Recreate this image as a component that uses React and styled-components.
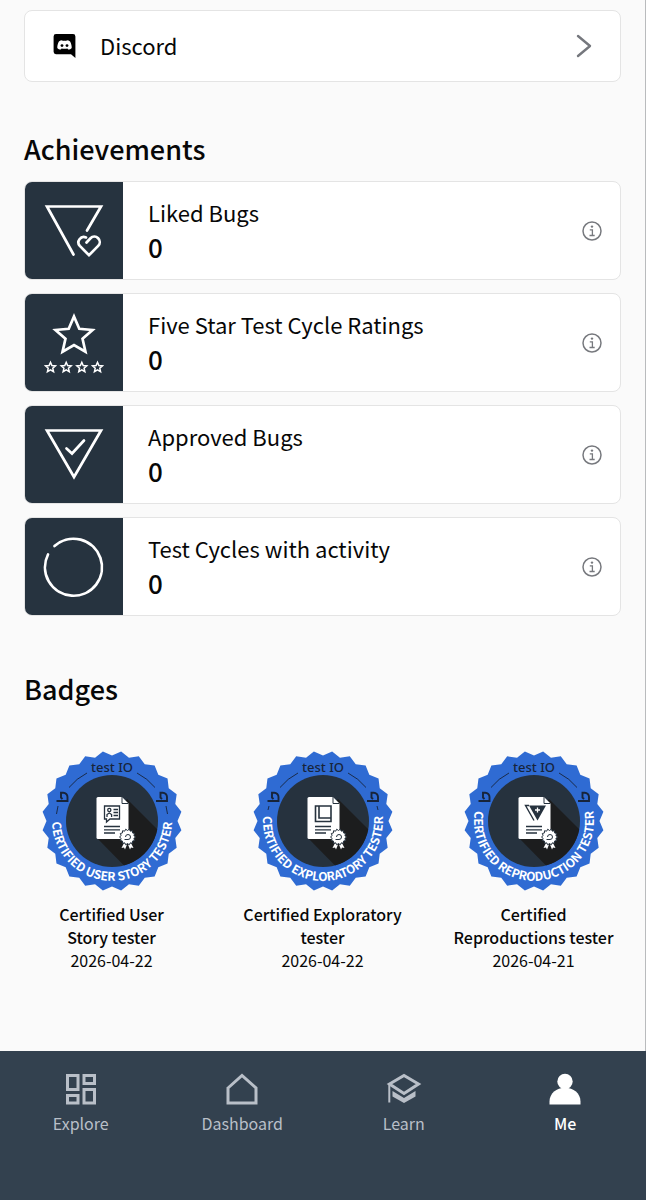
import styled, { createGlobalStyle } from "styled-components";

const achievements = [
  { title: "Liked Bugs", value: 0, icon: LikedIcon },
  { title: "Five Star Test Cycle Ratings", value: 0, icon: StarsIcon },
  { title: "Approved Bugs", value: 0, icon: ApprovedIcon },
  { title: "Test Cycles with activity", value: 0, icon: CycleIcon },
];

const badges = [
  {
    id: "story",
    title: "Certified User\nStory tester",
    ring: "CERTIFIED USER STORY TESTER",
    date: "2026-04-22",
  },
  {
    id: "exploratory",
    title: "Certified Exploratory\ntester",
    ring: "CERTIFIED EXPLORATORY TESTER",
    date: "2026-04-22",
  },
  {
    id: "reproduction",
    title: "Certified\nReproductions tester",
    ring: "CERTIFIED REPRODUCTION TESTER",
    date: "2026-04-21",
  },
];

const tabs = [
  { label: "Explore", icon: ExploreIcon },
  { label: "Dashboard", icon: HomeIcon },
  { label: "Learn", icon: LearnIcon },
  { label: "Me", icon: MeIcon, active: true },
];

const App = () => {
  return (
    <>
      <GlobalStyle />
      <Page>
        <Content>
          <LinkCard href="#discord">
            <DiscordIcon />
            <span>Discord</span>
            <ChevronIcon />
          </LinkCard>

          {/* achievements */}
          <section>
            <Heading>Achievements</Heading>
            <CardList>
              {achievements.map(({ title, value, icon: Icon }) => (
                <Card key={title}>
                  <Tile>
                    <Icon />
                  </Tile>
                  <CardText>
                    <CardTitle>{title}</CardTitle>
                    <CardValue>{value}</CardValue>
                  </CardText>
                  <InfoButton aria-label={`About ${title}`}>
                    <InfoIcon />
                  </InfoButton>
                </Card>
              ))}
            </CardList>
          </section>

          {/* badges */}
          <section>
            <Heading>Badges</Heading>
            <BadgeGrid>
              {badges.map((badge) => (
                <Badge key={badge.id}>
                  <Seal id={badge.id} ring={badge.ring} />
                  <BadgeTitle>{badge.title}</BadgeTitle>
                  <BadgeDate>{badge.date}</BadgeDate>
                </Badge>
              ))}
            </BadgeGrid>
          </section>
        </Content>

        <TabBar>
          {tabs.map(({ label, icon: Icon, active }) => (
            <Tab key={label} href={`#${label.toLowerCase()}`} $active={active}>
              <Icon />
              <span>{label}</span>
            </Tab>
          ))}
        </TabBar>
      </Page>
    </>
  );
};

export default App;

// icons

function DiscordIcon() {
  return (
    <svg width="24" height="26" viewBox="0 0 24 26">
      <path
        fill="#000"
        d="M3 1h17a2.4 2.4 0 0 1 2.4 2.4V25l-4.4-3.800H3A2.4 2.4 0 0 1 .6 18.800V3.400A2.4 2.4 0 0 1 3 1z"
      />
      <path
        fill="#fff"
        d="M9.300 7.300l.4.700c1.200-.2 2.400-.2 3.600 0l.4-.7c1.300.1 2.500.5 3.400 1.100 1.100 2 1.700 4.200 1.600 6.500-.9 1.100-2.100 1.600-3.500 1.700l-.8-1.200c-1.900.5-3.900.5-5.800 0l-.8 1.200c-1.400-.1-2.600-.6-3.500-1.700-.1-2.300.5-4.500 1.600-6.500.9-.6 2.100-1 3.400-1.100z"
      />
      <circle cx="9" cy="12.600" r="1.400" />
      <circle cx="14" cy="12.600" r="1.400" />
    </svg>
  );
}

function ChevronIcon() {
  return (
    <svg width="16" height="24" viewBox="0 0 16 24">
      <path
        d="M2 2l12 10L2 22"
        fill="none"
        stroke="#75777d"
        strokeWidth="2.4"
        strokeLinecap="round"
        strokeLinejoin="round"
      />
    </svg>
  );
}

function InfoIcon() {
  return (
    <svg width="20" height="20" viewBox="0 0 20 20" fill="none" stroke="#77797e">
      <circle cx="10" cy="10" r="9" strokeWidth="1.5" />
      <path d="M7.800 8.800h2.600v5.400M7.500 14.500h5.200" strokeWidth="1.3" />
      <circle cx="10" cy="5.600" r="1.2" fill="#77797e" stroke="none" />
    </svg>
  );
}

function LikedIcon() {
  return (
    <svg width="64" height="64" viewBox="0 0 64 64" {...line}>
      <path d="M31.500 55.500L5 7.500h54L45 31.500" />
      <path d="M44.500 43.500l4-4.200a5.400 5.400 0 0 1 7.700 7.600L47 56.200l-9.200-9.300a5.400 5.400 0 0 1 6.200-8.500" />
    </svg>
  );
}

const starPoints = (cx, cy, r) => {
  const points = Array.from({ length: 10 }, (_, i) => {
    const angle = (i * Math.PI) / 5 - Math.PI / 2;
    const radius = i % 2 ? r * 0.46 : r;
    return `${cx + radius * Math.cos(angle)},${cy + radius * Math.sin(angle)}`;
  });
  return points.join(" ");
};

function StarsIcon() {
  return (
    <svg width="64" height="64" viewBox="0 0 64 64" {...line}>
      <polygon points={starPoints(32, 25, 19.500)} />
      {[8.500, 24.200, 39.800, 55.500].map((x) => (
        <polygon key={x} points={starPoints(x, 56.500, 5.200)} strokeWidth="1.5" />
      ))}
    </svg>
  );
}

function ApprovedIcon() {
  return (
    <svg width="64" height="64" viewBox="0 0 64 64" {...line}>
      <path d="M5 7.500h54L32 54z" />
      <path d="M24.500 25.500l5.500 5L42 17.500" />
    </svg>
  );
}

function CycleIcon() {
  return (
    <svg width="64" height="64" viewBox="0 0 64 64" {...line}>
      <path d="M12.500 11A28.500 28.500 0 1 1 6 19.500" />
    </svg>
  );
}

function ExploreIcon() {
  return (
    <svg width="36" height="36" viewBox="0 0 36 36" {...tabLine}>
      <path d="M4.500 4.500h10.500v14H4.500zM21 4.500h10.500v8H21zM4.500 24.500h10.500v7.500H4.500zM21 18.500h10.500V32H21z" />
    </svg>
  );
}

function HomeIcon() {
  return (
    <svg width="36" height="36" viewBox="0 0 36 36" {...tabLine}>
      <path d="M4 17L18 4.500 32 17v15H4z" />
    </svg>
  );
}

function LearnIcon() {
  return (
    <svg width="36" height="36" viewBox="0 0 36 36" {...tabLine}>
      <path d="M3.500 13L18 4.500 32.500 13 18 22.500z" />
      <path d="M3.300 13v18.500" strokeWidth="2" />
      <path d="M6.500 20L18 27l11.500-7v5.500L18 32 6.500 25.500z" fill="currentColor" stroke="none" />
    </svg>
  );
}

function MeIcon() {
  return (
    <svg width="36" height="36" viewBox="0 0 36 36" fill="currentColor">
      <circle cx="18" cy="10.500" r="7.700" />
      <path d="M2.500 33.500v-3C2.500 22.500 9.500 16.800 18 16.800s15.500 5.700 15.500 13.700v3z" />
    </svg>
  );
}

// badge seal

const toothedEdge = (cx, cy, teeth, inner, outer) =>
  Array.from({ length: teeth * 2 }, (_, i) => {
    const angle = (i * Math.PI) / teeth - Math.PI / 2;
    const radius = i % 2 ? outer : inner;
    return `${cx + radius * Math.cos(angle)},${cy + radius * Math.sin(angle)}`;
  }).join(" ");

const sealEdge = toothedEdge(70, 70, 24, 65.500, 70);
const rosetteEdge = toothedEdge(85.500, 86, 14, 6.500, 8);

function SealPicture({ id }) {
  if (id === "story") {
    return (
      <g fill="none" stroke="#26323e" strokeWidth="1.3">
        <path d="M62.500 55h15v13H68l-3.500 3v-3h-2z" />
        <circle cx="67.300" cy="59" r="1.6" />
        <path d="M65 66v-2.500l2.300-1.500 2.300 1.500V66M71.500 58.500h4.500M71.500 61.500h4.500M71.500 64.500h4.500" />
      </g>
    );
  }
  if (id === "exploratory") {
    return (
      <g fill="none" stroke="#26323e" strokeWidth="1.6">
        <path d="M62.500 55H78v15.500H62.500z" />
        <path d="M66 55v12h12" />
      </g>
    );
  }
  return (
    <g>
      <path d="M65 54.500h17L73.500 69.500z" fill="#26323e" />
      <path d="M65 54.500h-3.500L70 69.500" fill="none" stroke="#26323e" strokeWidth="1.4" />
      <path d="M73.500 56.500v5M71 59h5" stroke="#fff" strokeWidth="1.3" />
    </g>
  );
}

function Seal({ id, ring }) {
  return (
    <SealSvg viewBox="0 0 140 140" role="img" aria-label={ring}>
      <defs>
        <path id={`ring-${id}`} d="M13.400 50A60 60 0 1 0 126.600 50" />
        <clipPath id={`disc-${id}`}>
          <circle cx="70" cy="70" r="46" />
        </clipPath>
      </defs>
      <polygon points={sealEdge} fill="#2f6bd3" />
      <circle cx="70" cy="70" r="46" fill="#26323e" />
      <path
        d="M85 48L140 103v40H110L55 87z"
        fill="#1c1d1e"
        clipPath={`url(#disc-${id})`}
      />
      <path d="M56 46h24l6.500 6.500V88H56a1.500 1.500 0 0 1-1.500-1.500v-39A1.500 1.500 0 0 1 56 46z" fill="#fff" />
      <path d="M80 46v6.500h6.500" fill="none" stroke="#26323e" />
      <SealPicture id={id} />
      <path d="M62 75.500h16M62 78.800h16M62 82h11" stroke="#26323e" strokeWidth="1.3" />
      <path d="M82 92l-2.500 5 2.500-.5 1 2 2-5zM89 92l2.500 5-2.500-.5-1 2-2-5z" fill="#fff" />
      <polygon points={rosetteEdge} fill="#fff" stroke="#26323e" />
      <path d="M82.500 88.500h3.500a2.500 2.500 0 1 0-2.500-2.500" fill="none" stroke="#26323e" />

      <g fill="none" stroke="#17243a" strokeWidth="0.9">
        <path d="M27 36.500A57 57 0 0 1 45 22M95 22A57 57 0 0 1 113 36.500" />
        {id === "story" && <path d="M16 55l-1.500 8M124 55l1.500 8" />}
        {id === "exploratory" && <path d="M16 55l-1 4M124 55l1 4" />}
      </g>
      <SealMark />
      <g transform="translate(99.500 0)">
        <SealMark />
      </g>
      <BrandText x="70" y="21">
        test IO
      </BrandText>
      <RingText>
        <textPath href={`#ring-${id}`} startOffset="50%">
          {ring}
        </textPath>
      </RingText>
    </SealSvg>
  );
}

function SealMark() {
  return (
    <path
      d="M14.500 50h11v-4a4.200 4.200 0 0 0-4.200-4.200h-2.300v4.700l1.500 1.500"
      fill="none"
      stroke="#17243a"
      strokeWidth="1.9"
    />
  );
}

const line = {
  fill: "none",
  stroke: "#fff",
  strokeWidth: 2.7,
  strokeLinejoin: "miter",
  strokeLinecap: "round",
};

const tabLine = {
  fill: "none",
  stroke: "currentColor",
  strokeWidth: 3,
};

// styled components css

const GlobalStyle = createGlobalStyle`
  * {
    box-sizing: border-box;
  }

  body {
    margin: 0;
    background: #fafafa;
    color: #070707;
    font-family: "Noto Sans CJK JP", "Noto Sans", sans-serif;
  }
`;

const Page = styled.div`
  display: flex;
  flex-direction: column;
  min-height: 100vh;
`;

const Content = styled.main`
  flex: 1;
  padding: 10px 24px 0;
  border-right: 1px solid #b9bbbd;
`;

const LinkCard = styled.a`
  display: flex;
  align-items: center;
  gap: 23px;
  height: 72px;
  padding: 0 28px;
  border: 1px solid #e4e4e4;
  border-radius: 8px;
  background: #fff;
  color: inherit;
  font-size: 22px;
  line-height: 32px;
  text-decoration: none;

  span {
    flex: 1;
    padding-bottom: 2px;
  }
`;

const Heading = styled.h2`
  margin: 0;
  padding: 47px 0 12px;
  font-size: 27px;
  font-weight: 500;
  line-height: 40px;
`;

const CardList = styled.div`
  display: flex;
  flex-direction: column;
  gap: 13px;
  padding-bottom: 6px;
`;

const Card = styled.article`
  display: flex;
  align-items: center;
  height: 99px;
  overflow: hidden;
  border: 1px solid #e4e4e4;
  border-radius: 8px;
  background: #fff;
`;

const Tile = styled.div`
  display: flex;
  align-items: center;
  justify-content: center;
  width: 98px;
  height: 100%;
  background: #26333f;
`;

const CardText = styled.div`
  flex: 1;
  padding-left: 25px;
`;

const CardTitle = styled.h3`
  margin: 0;
  font-size: 22px;
  font-weight: 400;
  line-height: 32px;
`;

const CardValue = styled.div`
  font-size: 26px;
  font-weight: 500;
  line-height: 38px;
`;

const InfoButton = styled.button`
  display: flex;
  margin-right: 18px;
  padding: 0;
  border: none;
  background: none;
`;

const BadgeGrid = styled.div`
  display: grid;
  grid-template-columns: repeat(3, 1fr);
  gap: 36px;
  padding: 30px 0 48px;
`;

const Badge = styled.article`
  display: flex;
  flex-direction: column;
  align-items: center;
  text-align: center;
`;

const SealSvg = styled.svg`
  width: 140px;
  height: 140px;
  margin-bottom: 12px;
`;

const BrandText = styled.text`
  fill: #17243a;
  font-family: "Noto Sans", sans-serif;
  font-size: 13px;
  font-weight: 500;
  text-anchor: middle;
`;

const RingText = styled.text`
  fill: #fff;
  font-size: 12px;
  font-weight: 700;
  text-anchor: middle;
`;

const BadgeTitle = styled.h3`
  margin: 0;
  font-size: 16px;
  font-weight: 500;
  line-height: 23px;
  white-space: pre-line;
`;

const BadgeDate = styled.time`
  font-size: 16px;
  line-height: 23px;
`;

const TabBar = styled.nav`
  display: grid;
  grid-template-columns: repeat(4, 1fr);
  height: 149px;
  padding-top: 20px;
  background: #33414f;
`;

const Tab = styled.a`
  display: flex;
  flex-direction: column;
  align-items: center;
  gap: 4px;
  color: ${(props) => (props.$active ? "#fff" : "#b9bfc8")};
  font-size: 16px;
  font-weight: ${(props) => (props.$active ? 500 : 400)};
  line-height: 24px;
  text-decoration: none;
`;
